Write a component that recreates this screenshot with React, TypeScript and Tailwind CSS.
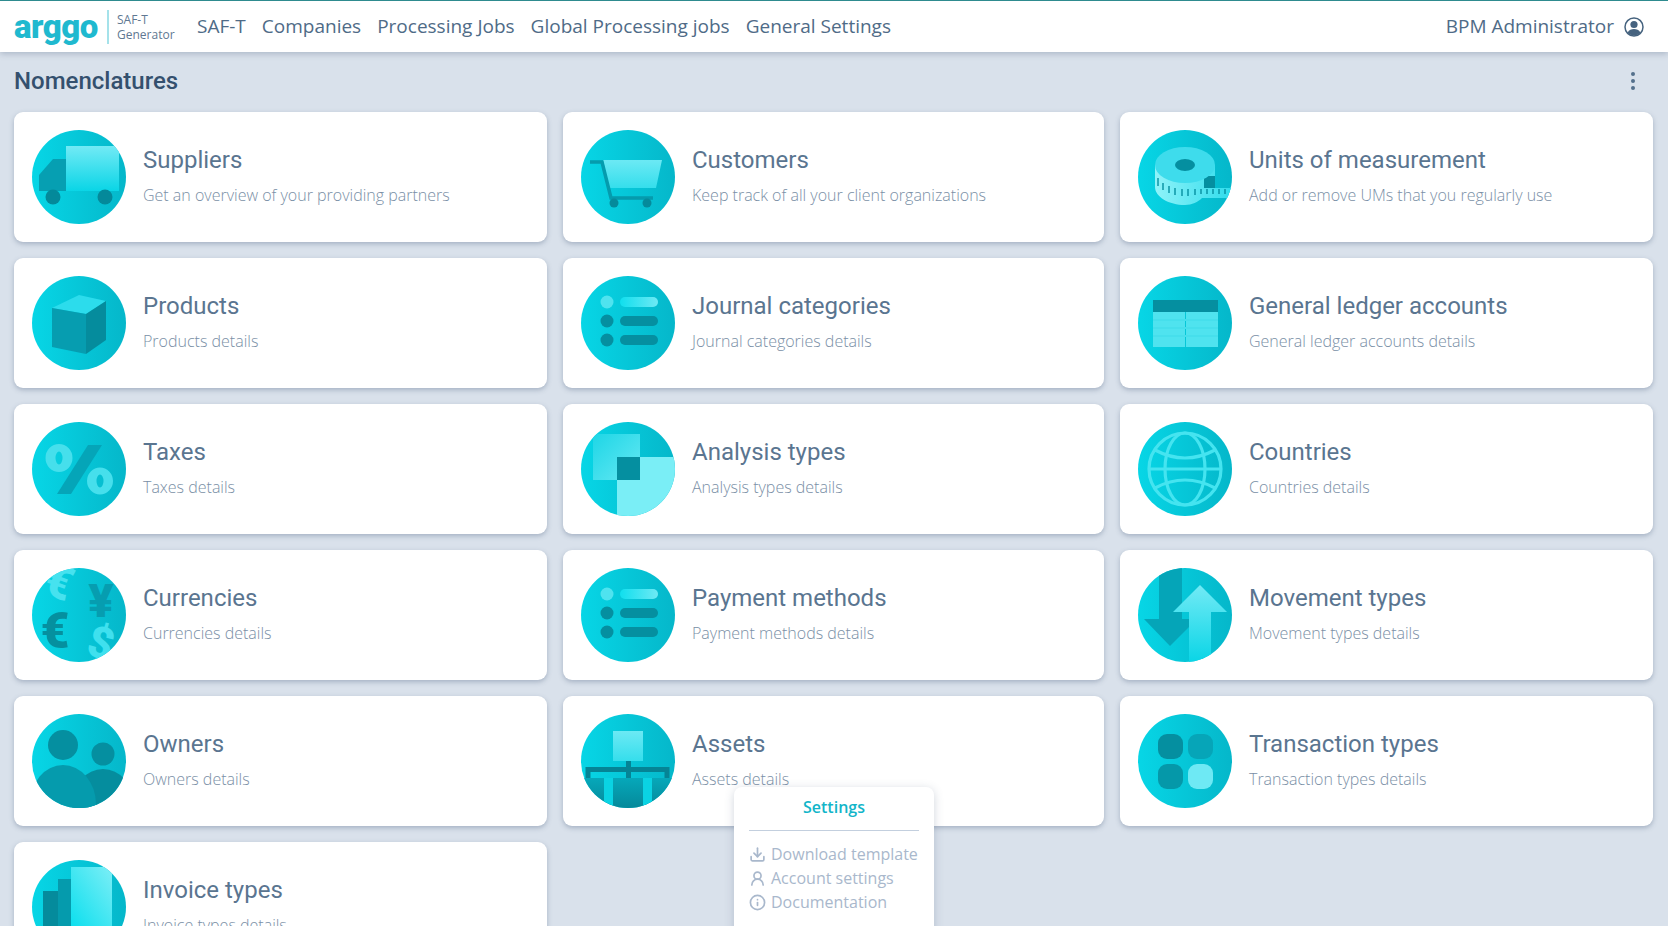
import { Download, Info, UserRound } from "lucide-react";
import type { ReactNode } from "react";

const Shell = ({ children }: { children?: ReactNode }) => (
  <svg viewBox="0 0 94 94" className="h-[94px] w-[94px] shrink-0">
    <circle cx="47" cy="47" r="47" fill="url(#bg)" />
    <g clipPath="url(#round)">{children}</g>
  </svg>
);

const Defs = () => (
  <svg className="absolute h-0 w-0">
    <defs>
      <clipPath id="round">
        <circle cx="47" cy="47" r="47" />
      </clipPath>
      <linearGradient id="bg" x1="0" y1="0" x2="1" y2="0">
        <stop offset="0" stopColor="#07d6e6" />
        <stop offset="1" stopColor="#05b7ca" />
      </linearGradient>
      <linearGradient id="lightDown" x1="0" y1="0" x2="0" y2="1">
        <stop offset="0" stopColor="#72eaf5" />
        <stop offset="1" stopColor="#0ad5e6" />
      </linearGradient>
      <linearGradient id="lightSoft" x1="0" y1="0" x2="0" y2="1">
        <stop offset="0" stopColor="#6ce9f4" />
        <stop offset="1" stopColor="#35deec" />
      </linearGradient>
      <linearGradient id="lightDiag" x1="0" y1="1" x2="1" y2="0">
        <stop offset="0" stopColor="#0cdfee" />
        <stop offset="1" stopColor="#7ceef6" />
      </linearGradient>
      <linearGradient id="lightRight" x1="0" y1="0" x2="1" y2="0">
        <stop offset="0" stopColor="#10dfee" />
        <stop offset="1" stopColor="#6ee9f4" />
      </linearGradient>
      <linearGradient id="squareDiag" x1="0" y1="0" x2="1" y2="1">
        <stop offset="0" stopColor="#1ed6e6" />
        <stop offset="1" stopColor="#66e8f3" />
      </linearGradient>
      <linearGradient id="darkDown" x1="0" y1="0" x2="0" y2="1">
        <stop offset="0" stopColor="#06a8ba" />
        <stop offset="1" stopColor="#05899a" />
      </linearGradient>
      <linearGradient id="tapeSide" x1="0" y1="0" x2="1" y2="0">
        <stop offset="0" stopColor="#8ff3f9" />
        <stop offset="1" stopColor="#2fdcec" />
      </linearGradient>
    </defs>
  </svg>
);

const Truck = () => (
  <Shell>
    <path d="M21 29H34V61H7V45Z" fill="#069fb2" />
    <rect x="34" y="16" width="53" height="45" fill="url(#lightDown)" />
    <circle cx="21" cy="67" r="7.5" fill="#04899a" />
    <circle cx="73" cy="67" r="7.5" fill="#04899a" />
  </Shell>
);

const Cart = () => (
  <Shell>
    <path d="M22 30H81L75 58H28Z" fill="url(#lightSoft)" />
    <path d="M9 32H21L30 68H72" fill="none" stroke="#059bad" strokeWidth="3.5" />
    <circle cx="33" cy="73" r="4.5" fill="#058a9b" />
    <circle cx="66" cy="73" r="4.5" fill="#058a9b" />
  </Shell>
);

const Tape = () => (
  <Shell>
    <path d="M47 58H94V68H47Z" fill="#10dcec" />
    <path d="M17 35V57C17 67 31 75 47 75C54 75 60 72 64 68H94V58H77V35Z" fill="url(#tapeSide)" />
    <rect x="66" y="46" width="11" height="12" fill="#058fa0" />
    <ellipse cx="47" cy="35" rx="30" ry="18" fill="#3edcec" />
    <ellipse cx="47" cy="35" rx="10" ry="6" fill="#058fa0" />
    <path
      d="M20 48V56M25 53V60M31 56V63M37 58V65M44 59V66M50 59V66M57 59V65M63 59V64M69 59V64M75 59V64M81 59V64M87 59V64"
      stroke="#058fa0"
      strokeWidth="1.4"
    />
  </Shell>
);

const Cube = () => (
  <Shell>
    <path d="M20 32L47 19L74 25L54 38Z" fill="#2cdcec" />
    <path d="M20 32L54 38V78L20 71Z" fill="#069db0" />
    <path d="M54 38L74 25V64L54 78Z" fill="#058c9d" />
  </Shell>
);

const ListIcon = () => (
  <Shell>
    <circle cx="26" cy="26" r="6.5" fill="#4fe3ef" />
    <rect x="39" y="21" width="38" height="10" rx="5" fill="url(#lightRight)" />
    <circle cx="26" cy="45" r="6.5" fill="#058fa0" />
    <rect x="39" y="40" width="38" height="10" rx="5" fill="#058fa0" />
    <circle cx="26" cy="64" r="6.5" fill="#058fa0" />
    <rect x="39" y="59" width="38" height="10" rx="5" fill="#058fa0" />
  </Shell>
);

const Ledger = () => (
  <Shell>
    <rect x="15" y="24" width="65" height="12" fill="#058fa0" />
    <rect x="15" y="36" width="32" height="35" fill="#4fe3ef" />
    <rect x="48" y="36" width="32" height="35" fill="#4fe3ef" />
    <path d="M15 44H80M15 52H80M15 60H80" stroke="#46dfec" strokeWidth="2" />
  </Shell>
);

const Percent = () => (
  <Shell>
    <path d="M56 23H70L39 72H25Z" fill="#05a5b8" />
    <path
      fillRule="evenodd"
      d="M13.5 36a13.5 14 0 1 0 27 0a13.5 14 0 1 0 -27 0ZM23.5 36a3.5 6.5 0 1 0 7 0a3.5 6.5 0 1 0 -7 0Z"
      fill="#46dfec"
    />
    <path
      fillRule="evenodd"
      d="M55 59a13 13.5 0 1 0 26 0a13 13.5 0 1 0 -26 0ZM64.5 59a3.5 6.5 0 1 0 7 0a3.5 6.5 0 1 0 -7 0Z"
      fill="#46dfec"
    />
  </Shell>
);

const Blocks = () => (
  <Shell>
    <rect x="12" y="12" width="47" height="46" fill="url(#squareDiag)" />
    <path d="M59 35H94V94H36V58H59Z" fill="#7aeef6" />
    <rect x="36" y="35" width="23" height="23" fill="#058fa0" />
  </Shell>
);

const Globe = () => (
  <Shell>
    <g fill="none" stroke="#45e4f0" strokeWidth="3.2">
      <circle cx="47" cy="47" r="36" />
      <ellipse cx="47" cy="47" rx="20" ry="36" />
      <path d="M11 47H83M17 28Q47 44 77 28M17 66Q47 50 77 66" />
    </g>
  </Shell>
);

const Coins = () => (
  <Shell>
    <g fontFamily="Roboto, sans-serif" fontWeight="900" textAnchor="middle">
      <text x="27" y="30" fontSize="46" fill="#46e2ef" transform="rotate(20 27 15)">€</text>
      <text x="69" y="49" fontSize="47" fill="#069db0">¥</text>
      <text x="23" y="80" fontSize="50" fill="#05909f">€</text>
      <text x="69" y="90" fontSize="44" fill="#3fe0ee" transform="rotate(15 69 75)">$</text>
    </g>
  </Shell>
);

const Arrows = () => (
  <Shell>
    <path d="M21 0H44V51H59L32 78L6 51H21Z" fill="#05a5b8" />
    <path d="M62 17L89 44H73V94H51V44H35Z" fill="url(#lightDown)" />
  </Shell>
);

const People = () => (
  <Shell>
    <circle cx="31" cy="31" r="15" fill="#058fa0" />
    <circle cx="71" cy="40" r="11.5" fill="#058fa0" />
    <ellipse cx="71" cy="90" rx="31" ry="35" fill="#058d9e" />
    <ellipse cx="31" cy="90" rx="33" ry="39" fill="#059bad" />
  </Shell>
);

const OrgChart = () => (
  <Shell>
    <rect x="0" y="64" width="94" height="30" fill="url(#darkDown)" />
    <rect x="23" y="64" width="9" height="30" fill="#0ad3e3" />
    <rect x="62" y="64" width="9" height="30" fill="#0ad3e3" />
    <rect x="32" y="17" width="30" height="30" fill="url(#lightSoft)" />
    <path d="M7 64V55.5H86V64M47.5 47V64" fill="none" stroke="#058495" strokeWidth="5" />
  </Shell>
);

const Squares = () => (
  <Shell>
    <rect x="20" y="20" width="25" height="25" rx="9" fill="#058fa0" />
    <rect x="50" y="20" width="25" height="25" rx="9" fill="#06a5b8" />
    <rect x="20" y="50" width="25" height="25" rx="9" fill="#0598a9" />
    <rect x="50" y="50" width="25" height="25" rx="9" fill="#6ee9f4" />
  </Shell>
);

const Invoice = () => (
  <Shell>
    <rect x="11" y="31" width="20" height="63" fill="#058b9c" />
    <rect x="26" y="19" width="20" height="75" fill="#059bad" />
    <rect x="39" y="7" width="41" height="60" fill="url(#lightDiag)" />
  </Shell>
);

const cards = [
  { title: "Suppliers", text: "Get an overview of your providing partners", icon: <Truck /> },
  { title: "Customers", text: "Keep track of all your client organizations", icon: <Cart /> },
  { title: "Units of measurement", text: "Add or remove UMs that you regularly use", icon: <Tape /> },
  { title: "Products", text: "Products details", icon: <Cube /> },
  { title: "Journal categories", text: "Journal categories details", icon: <ListIcon /> },
  { title: "General ledger accounts", text: "General ledger accounts details", icon: <Ledger /> },
  { title: "Taxes", text: "Taxes details", icon: <Percent /> },
  { title: "Analysis types", text: "Analysis types details", icon: <Blocks /> },
  { title: "Countries", text: "Countries details", icon: <Globe /> },
  { title: "Currencies", text: "Currencies details", icon: <Coins /> },
  { title: "Payment methods", text: "Payment methods details", icon: <ListIcon /> },
  { title: "Movement types", text: "Movement types details", icon: <Arrows /> },
  { title: "Owners", text: "Owners details", icon: <People /> },
  { title: "Assets", text: "Assets details", icon: <OrgChart /> },
  { title: "Transaction types", text: "Transaction types details", icon: <Squares /> },
  { title: "Invoice types", text: "Invoice types details", icon: <Invoice /> },
];

const navLinks = ["SAF-T", "Companies", "Processing Jobs", "Global Processing jobs", "General Settings"];

const menuItems = [
  { label: "Download template", icon: <Download size={17} strokeWidth={2.4} /> },
  { label: "Account settings", icon: <UserRound size={17} strokeWidth={2.4} /> },
  { label: "Documentation", icon: <Info size={17} strokeWidth={2.4} /> },
];

const App = () => {
  return (
    <div className="relative h-[926px] overflow-hidden bg-[#d9e1eb] font-['Open_Sans',sans-serif]">
      <Defs />
      <header className="relative z-10 flex h-[52px] items-center border-t border-[#2e8b8f] bg-white pr-[24px] pl-[14px] shadow-[0_2px_6px_rgba(70,90,120,0.3)]">
        <span className="w-[85px] font-['Roboto',sans-serif] text-[33px] leading-none font-black tracking-[-0.5px] whitespace-nowrap text-[#1fb9cf]">
          arggo
        </span>
        <div className="ml-[8px] h-[34px] w-[2px] bg-[#a5e2ea]" />
        <div className="ml-[8px] w-[66px] text-[12px] leading-[15px] text-[#5f7892]">
          <div>SAF-T</div>
          <div>Generator</div>
        </div>
        <nav className="ml-[14px] flex gap-4 text-[19px] text-[#4f6b87]">
          {navLinks.map((link) => (
            <span key={link}>{link}</span>
          ))}
        </nav>
        <div className="ml-auto flex items-center gap-[10px] text-[19px] text-[#4f6b87]">
          <span>BPM Administrator</span>
          <svg viewBox="0 0 20 20" className="h-[20px] w-[20px]">
            <circle cx="10" cy="10" r="9" fill="none" stroke="#46637f" strokeWidth="1.5" />
            <circle cx="10" cy="7.5" r="3.6" fill="#46637f" />
            <path d="M3.6 15.5C5 12.8 7.5 12 10 12C12.5 12 15 12.8 16.4 15.5C14.8 17.4 12.5 18.4 10 18.4C7.5 18.4 5.2 17.4 3.6 15.5Z" fill="#46637f" />
          </svg>
        </div>
      </header>

      <div className="flex h-[60px] items-center justify-between pr-[33px] pb-[2px] pl-[14px]">
        <h1 className="font-['Roboto',sans-serif] text-[24px] font-medium text-[#34506e]">Nomenclatures</h1>
        <div className="flex flex-col gap-[3px]">
          <span className="h-[4px] w-[4px] rounded-full bg-[#54708c]" />
          <span className="h-[4px] w-[4px] rounded-full bg-[#54708c]" />
          <span className="h-[4px] w-[4px] rounded-full bg-[#54708c]" />
        </div>
      </div>

      <main className="grid grid-cols-[533px_541px_533px] gap-4 px-[14px]">
        {cards.map((card) => (
          <div
            key={card.title}
            className="flex h-[130px] items-center gap-[17px] rounded-[9px] bg-white px-[18px] shadow-[0_2px_5px_rgba(70,90,120,0.35)]"
          >
            {card.icon}
            <div className="pb-[2px]">
              <div className="mb-[10px] font-['Roboto',sans-serif] text-[24px] leading-[28px] text-[#5a7590]">
                {card.title}
              </div>
              <div className="text-[16px] leading-[22px] font-light text-[#7a8fa6]">{card.text}</div>
            </div>
          </div>
        ))}
      </main>

      <div className="absolute top-[787px] left-[734px] h-[160px] w-[200px] rounded-[8px] bg-white px-[15px] pt-[9px] shadow-[0_2px_10px_rgba(70,90,120,0.25)]">
        <div className="border-b border-[#c3cfde] pb-[12px] text-center text-[16px] leading-[22px] font-semibold text-[#12b5c9]">
          Settings
        </div>
        <div className="mt-[11px] flex flex-col">
          {menuItems.map((item) => (
            <div key={item.label} className="flex h-[24px] items-center gap-[5px] text-[16px] whitespace-nowrap text-[#a9b8cc]">
              {item.icon}
              <span>{item.label}</span>
            </div>
          ))}
        </div>
      </div>
    </div>
  );
};

export default App;
